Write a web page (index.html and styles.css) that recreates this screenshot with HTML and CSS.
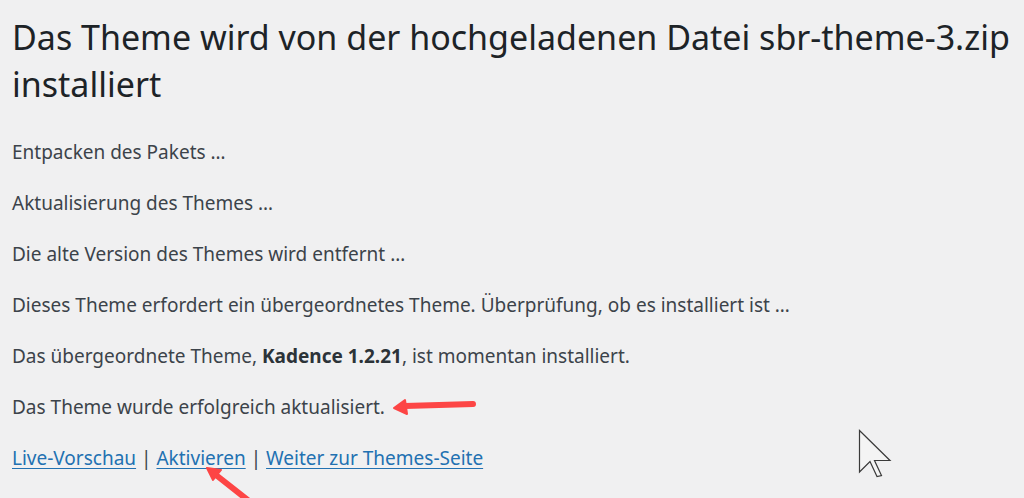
FILE: index.html
```html
<!DOCTYPE html>
<html lang="de">
<head>
    <meta charset="UTF-8">
    <meta name="viewport" content="width=device-width, initial-scale=1.0">
    <title>Theme installieren</title>
    <link rel="stylesheet" href="styles.css">
</head>
<body>
    <div class="wrap">
        <h1>Das Theme wird von der hochgeladenen Datei sbr-theme-3.zip installiert</h1>
        <p>Entpacken des Pakets …</p>
        <p>Aktualisierung des Themes …</p>
        <p>Die alte Version des Themes wird entfernt …</p>
        <p>Dieses Theme erfordert ein übergeordnetes Theme. Überprüfung, ob es installiert ist …</p>
        <p>Das übergeordnete Theme, <strong>Kadence 1.2.21</strong>, ist momentan installiert.</p>
        <p>Das Theme wurde erfolgreich aktualisiert.</p>
        <p class="actions"><a href="#">Live-Vorschau</a> | <a href="#">Aktivieren</a> | <a href="#">Weiter zur Themes-Seite</a></p>
    </div>

    <!-- annotation arrows -->
    <svg class="arrow arrow-one" width="90" height="20" viewBox="0 0 90 20">
        <path d="M14 9 L82 7" stroke="#fd4545" stroke-width="6" stroke-linecap="round" fill="none"/>
        <path d="M3 11 L14 3 L16 17 Z" fill="#fd4545" stroke="#fd4545" stroke-width="2" stroke-linejoin="round"/>
    </svg>
    <svg class="arrow arrow-two" width="50" height="40" viewBox="0 0 50 40">
        <path d="M12 8 L45 34" stroke="#fd4545" stroke-width="6" stroke-linecap="round" fill="none"/>
        <path d="M3 1 L17 3 L9 13 Z" fill="#fd4545" stroke="#fd4545" stroke-width="2" stroke-linejoin="round"/>
    </svg>

    <!-- mouse pointer -->
    <svg class="pointer" width="36" height="52" viewBox="0 0 36 52">
        <path d="M1.5 1.5 L1.5 43 L12 32.5 L19 47.5 L23.5 46.5 L16.5 31.5 L32 31.5 Z" fill="#f4f4f4" stroke="#3a3a3a" stroke-width="1.2" stroke-linejoin="miter"/>
    </svg>
</body>
</html>
```

FILE: styles.css
```css
html, body {
    margin: 0;
    padding: 0;
    background-color: #f0f0f1;
    height: 100%;
    overflow: hidden;
}
body {
    font-family: "Noto Sans", "Open Sans", sans-serif;
    color: #3c434a;
    position: relative;
}
.wrap {
    padding: 14px 12px 0;
}
h1 {
    margin: 0 0 29px;
    font-size: 34px;
    font-weight: 400;
    line-height: 47px;
    color: #1d2327;
}
p {
    margin: 0 0 21px;
    font-size: 19px;
    line-height: 30px;
}
p strong {
    font-weight: 700;
    color: #2c3338;
}
.actions a {
    color: #2271b1;
    text-decoration: underline;
    text-underline-offset: 3px;
}
.arrow {
    position: absolute;
    overflow: visible;
}
.arrow-one {
    left: 391px;
    top: 397px;
}
.arrow-two {
    left: 204px;
    top: 467px;
}
.pointer {
    position: absolute;
    left: 858px;
    top: 429px;
}
```
